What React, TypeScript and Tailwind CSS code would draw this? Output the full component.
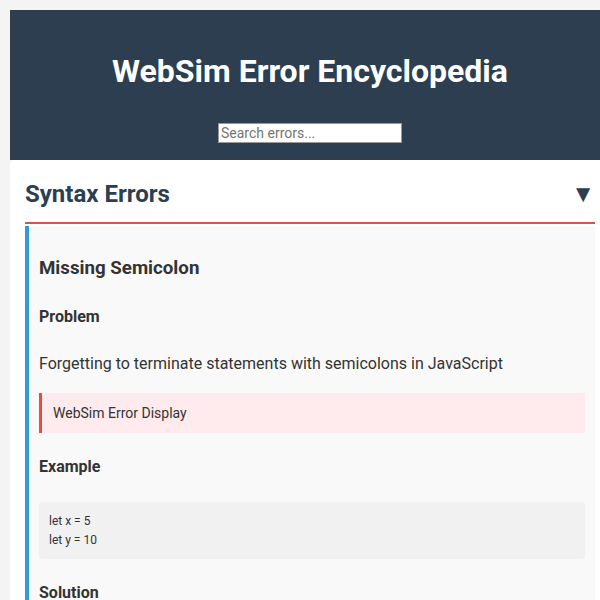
import React from 'react';

const font = { fontFamily: 'Roboto, "Liberation Sans", sans-serif' };

export default function App() {
  return (
    <div className="h-[600px] w-full overflow-hidden bg-[#f4f4f4] pl-[10px] pt-[10px] text-[#333]" style={font}>
      <div className="w-[600px]">
        {/* header */}
        <header className="flex h-[150px] flex-col items-center bg-[#2c3e50] pt-[42px] text-white">
          <h1 className="text-[32px] font-bold leading-[38px]">WebSim Error Encyclopedia</h1>
          <input
            type="text"
            placeholder="Search errors..."
            className="mt-[33px] h-[20px] w-[184px] border border-[#999] bg-white px-[2px] text-[14px] leading-[17px] text-[#333] placeholder-[#757575] outline-none"
          />
        </header>

        {/* section */}
        <section className="rounded-t-[4px] bg-white px-[15px] pt-[20px]">
          <div className="flex items-center justify-between border-b-2 border-[#d0584a] pb-[13px]">
            <h2 className="text-[24px] font-bold leading-[29px] text-[#2c3e50]">Syntax Errors</h2>
            <span className="text-[24px] leading-[29px] text-[#2c3e50]">▼</span>
          </div>

          <div className="mt-[2px] border-l-4 border-[#3498db] bg-[#f9f9f9] pb-[20px] pl-[10px] pr-[10px] pt-[31px]">
            <h3 className="text-[18.72px] font-bold leading-[22px]">Missing Semicolon</h3>
            <h4 className="mt-[28px] text-[16px] font-bold leading-[19px]">Problem</h4>
            <p className="mt-[28px] text-[16px] leading-[19px]">
              Forgetting to terminate statements with semicolons in JavaScript
            </p>
            <div className="mt-[20px] flex h-[40px] items-center border-l-[3px] border-[#e74c3c] bg-[#ffebee] pl-[11px] text-[14px]">
              WebSim Error Display
            </div>
            <h4 className="mt-[24px] text-[16px] font-bold leading-[19px]">Example</h4>
            <pre
              className="mt-[26px] rounded-[4px] bg-[#f1f1f1] px-[10px] pb-[9px] pt-[10px] text-[12px] leading-[19px]"
              style={font}
            >
              {'let x = 5\nlet y = 10'}
            </pre>
            <h4 className="mt-[24px] text-[16px] font-bold leading-[19px]">Solution</h4>
          </div>
        </section>
      </div>
    </div>
  );
}
